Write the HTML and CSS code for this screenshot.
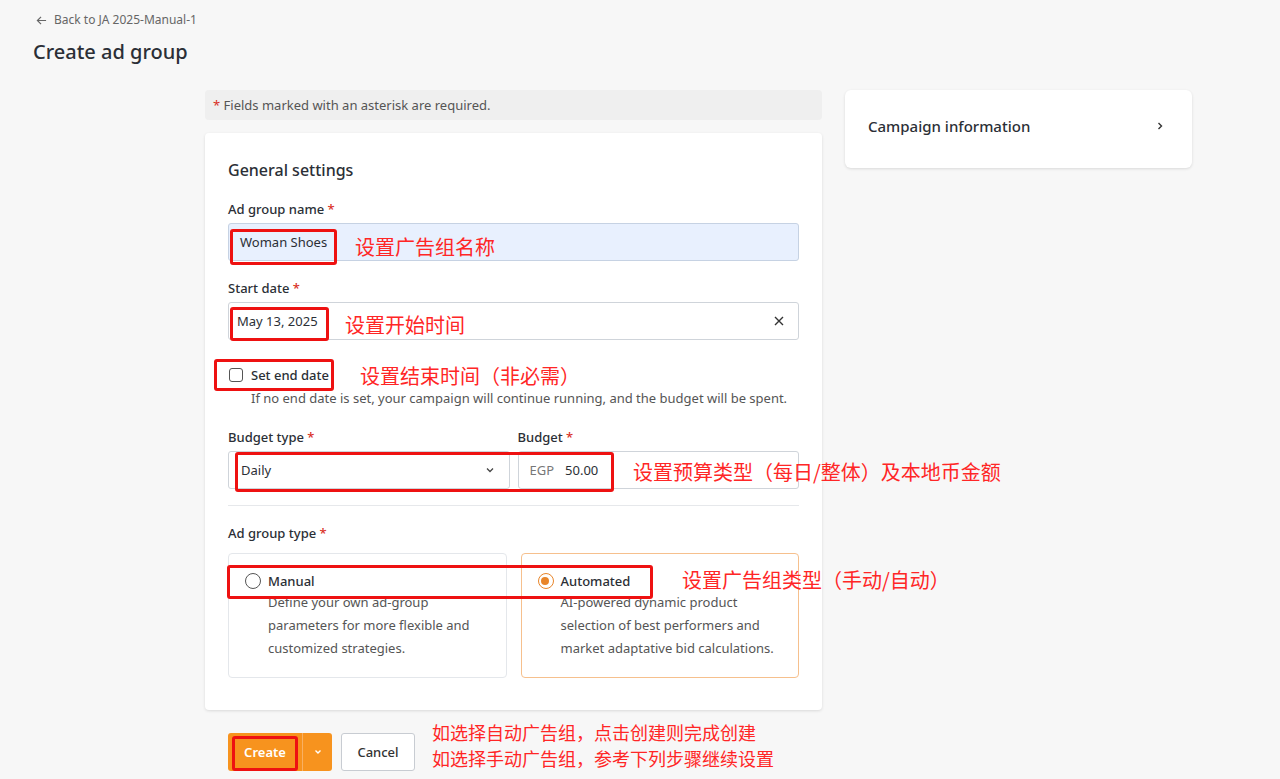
FILE: index.html
```html
<!DOCTYPE html>
<html lang="en">
<head>
    <meta charset="UTF-8">
    <meta name="viewport" content="width=device-width, initial-scale=1.0">
    <title>Create ad group</title>
    <link rel="stylesheet" href="styles.css">
</head>
<body>
    <div class="page">
        <div class="header">
            <a class="back-link" href="#">
                <svg width="11" height="11" viewBox="0 0 12 12"><path d="M11 6H1.5M5.5 2L1.5 6l4 4" fill="none" stroke="#666" stroke-width="1.3"/></svg>
                Back to JA 2025-Manual-1
            </a>
            <h1>Create ad group</h1>
        </div>

        <div class="layout">
            <div class="main-col">
                <div class="notice"><span class="req">*</span> Fields marked with an asterisk are required.</div>

                <div class="form-card">
                    <h2>General settings</h2>

                    <label class="field-label">Ad group name <span class="req">*</span></label>
                    <div class="input autofill">Woman Shoes</div>

                    <label class="field-label">Start date <span class="req">*</span></label>
                    <div class="input">
                        <span>May 13, 2025</span>
                        <svg class="clear" width="10" height="10" viewBox="0 0 10 10"><path d="M1 1l8 8M9 1L1 9" stroke="#333" stroke-width="1.4"/></svg>
                    </div>

                    <div class="check-row">
                        <span class="checkbox"></span>
                        <span class="check-label">Set end date</span>
                    </div>
                    <div class="helper">If no end date is set, your campaign will continue running, and the budget will be spent.</div>

                    <div class="budget-row">
                        <div class="budget-col">
                            <label class="field-label">Budget type <span class="req">*</span></label>
                            <div class="input select">
                                <span>Daily</span>
                                <svg width="10" height="10" viewBox="0 0 10 10"><path d="M2 3.5l3 3 3-3" fill="none" stroke="#444" stroke-width="1.3"/></svg>
                            </div>
                        </div>
                        <div class="budget-col">
                            <label class="field-label">Budget <span class="req">*</span></label>
                            <div class="input money">
                                <span class="currency">EGP</span>
                                <span>50.00</span>
                            </div>
                        </div>
                    </div>

                    <div class="divider"></div>

                    <label class="field-label">Ad group type <span class="req">*</span></label>
                    <div class="type-row">
                        <div class="type-card">
                            <div class="type-title"><span class="radio"></span>Manual</div>
                            <div class="type-desc">Define your own ad-group parameters for more flexible and customized strategies.</div>
                        </div>
                        <div class="type-card selected">
                            <div class="type-title"><span class="radio on"></span>Automated</div>
                            <div class="type-desc">AI-powered dynamic product selection of best performers and market adaptative bid calculations.</div>
                        </div>
                    </div>
                </div>

                <div class="actions">
                    <div class="split-btn">
                        <span class="split-main">Create</span>
                        <span class="split-arrow">
                            <svg width="10" height="10" viewBox="0 0 10 10"><path d="M2.5 3.5l2.5 2.5 2.5-2.5" fill="none" stroke="#fff" stroke-width="1.4"/></svg>
                        </span>
                    </div>
                    <button class="cancel-btn">Cancel</button>
                </div>
            </div>

            <div class="side-col">
                <div class="side-card">
                    <span>Campaign information</span>
                    <svg width="10" height="10" viewBox="0 0 10 10"><path d="M3.5 2l3 3-3 3" fill="none" stroke="#333" stroke-width="1.4"/></svg>
                </div>
            </div>
        </div>

        <!-- tutorial annotations -->
        <div class="mark" style="left:230px;top:229px;width:107px;height:36px"></div>
        <div class="mark" style="left:230px;top:307px;width:99px;height:34px"></div>
        <div class="mark" style="left:214px;top:359px;width:120px;height:32px"></div>
        <div class="mark" style="left:235px;top:452px;width:379px;height:40px"></div>
        <div class="mark" style="left:227px;top:565px;width:426px;height:34px"></div>
        <div class="mark" style="left:232px;top:736px;width:66px;height:35px"></div>

        <div class="note" style="left:355px;top:233px">设置广告组名称</div>
        <div class="note" style="left:345px;top:311px">设置开始时间</div>
        <div class="note" style="left:360px;top:362px">设置结束时间（非必需）</div>
        <div class="note" style="left:633px;top:458px">设置预算类型（每日/整体）及本地币金额</div>
        <div class="note" style="left:682px;top:566px">设置广告组类型（手动/自动）</div>
        <div class="note small" style="left:432px;top:719px">如选择自动广告组，点击创建则完成创建</div>
        <div class="note small" style="left:432px;top:745px">如选择手动广告组，参考下列步骤继续设置</div>
    </div>
</body>
</html>
```

FILE: styles.css
```css
html, body {
    margin: 0;
    padding: 0;
    background-color: #f7f7f7;
}
body {
    font-family: "Noto Sans", "Noto Sans CJK SC", sans-serif;
    color: #2b2f36;
    font-size: 13px;
}
.page {
    position: relative;
    height: 779px;
    overflow: hidden;
}
.header {
    padding: 12px 0 0 33px;
}
.back-link {
    display: flex;
    align-items: center;
    gap: 7px;
    padding-left: 3px;
    font-size: 12px;
    line-height: 16px;
    color: #666;
    text-decoration: none;
}
.header h1 {
    margin: 10px 0 0;
    font-size: 20px;
    line-height: 28px;
    font-weight: 500;
    color: #2b2f36;
}
.layout {
    display: flex;
    gap: 23px;
    padding: 24px 0 0 205px;
}
.main-col {
    width: 617px;
}
.side-col {
    width: 347px;
}
.notice {
    background-color: #efefef;
    border-radius: 4px;
    height: 30px;
    line-height: 30px;
    padding-left: 8px;
    color: #555;
    font-size: 13px;
}
.req {
    color: #d93025;
}
.form-card {
    margin-top: 13px;
    background-color: #fff;
    border-radius: 4px;
    box-shadow: 0 1px 3px rgba(0, 0, 0, 0.12);
    padding: 26px 23px 32px;
}
.form-card h2 {
    margin: 0 0 19px;
    font-size: 16px;
    line-height: 22px;
    font-weight: 500;
}
.field-label {
    display: block;
    font-size: 13px;
    line-height: 18px;
    font-weight: 500;
    margin-bottom: 5px;
}
.input {
    box-sizing: border-box;
    height: 38px;
    border: 1px solid #cfd4da;
    border-radius: 3px;
    display: flex;
    align-items: center;
    justify-content: space-between;
    padding: 0 14px 0 8px;
    font-size: 13px;
    color: #2b2f36;
    margin-bottom: 18px;
}
.input.autofill {
    background-color: #e8f0fe;
    border-color: #c6d2e3;
    padding-left: 11px;
}
.check-row {
    display: flex;
    align-items: center;
    gap: 8px;
    margin-top: 25px;
    height: 20px;
    padding-left: 1px;
}
.checkbox {
    box-sizing: border-box;
    width: 14px;
    height: 14px;
    border: 1.5px solid #555;
    border-radius: 3px;
}
.check-label {
    font-weight: 500;
}
.helper {
    margin: 4px 0 0 23px;
    line-height: 18px;
    color: #555;
}
.budget-row {
    display: flex;
    gap: 8px;
    margin-top: 21px;
}
.budget-col {
    flex: 1;
}
.budget-col .input {
    margin-bottom: 0;
}
.select {
    padding: 0 14px 0 12px;
}
.money {
    justify-content: flex-start;
    gap: 11px;
    padding-left: 11px;
}
.currency {
    color: #777;
}
.divider {
    height: 1px;
    background-color: #e6e8eb;
    margin: 16px 0 18px;
}
.type-row {
    display: flex;
    gap: 14px;
    margin-top: 11px;
}
.type-card {
    flex: 1;
    box-sizing: border-box;
    height: 125px;
    border: 1px solid #e4e7eb;
    border-radius: 4px;
    padding: 17px 12px 16px 39px;
}
.type-card.selected {
    border-color: #f6c08d;
}
.type-title {
    position: relative;
    font-weight: 500;
    line-height: 20px;
}
.radio {
    position: absolute;
    left: -23px;
    top: 2px;
    box-sizing: border-box;
    width: 16px;
    height: 16px;
    border: 1.5px solid #555;
    border-radius: 50%;
}
.radio.on {
    border-color: #e8852a;
}
.radio.on::after {
    content: "";
    position: absolute;
    left: 2.5px;
    top: 2.5px;
    width: 8px;
    height: 8px;
    border-radius: 50%;
    background-color: #e8852a;
}
.type-desc {
    line-height: 23px;
    color: #555;
}
.actions {
    display: flex;
    gap: 9px;
    margin-top: 23px;
    padding-left: 23px;
}
.split-btn {
    display: flex;
    height: 38px;
    background-color: #f7931e;
    border-radius: 3px;
    color: #fff;
    font-weight: 600;
}
.split-main {
    width: 74px;
    display: flex;
    align-items: center;
    justify-content: center;
    border-right: 1px solid #f9b062;
}
.split-arrow {
    width: 29px;
    display: flex;
    align-items: center;
    justify-content: center;
}
.cancel-btn {
    height: 38px;
    width: 74px;
    background-color: #fff;
    border: 1px solid #c8ccd2;
    border-radius: 3px;
    font-family: inherit;
    font-size: 13px;
    font-weight: 500;
    color: #333;
}
.side-card {
    box-sizing: border-box;
    height: 78px;
    background-color: #fff;
    border-radius: 6px;
    box-shadow: 0 1px 3px rgba(0, 0, 0, 0.12);
    display: flex;
    align-items: center;
    justify-content: space-between;
    padding: 0 27px 6px 23px;
    font-size: 15px;
    font-weight: 500;
}
.mark {
    position: absolute;
    box-sizing: border-box;
    border: 3px solid #ee1111;
    border-radius: 3px;
}
.note {
    position: absolute;
    font-family: "Noto Sans CJK SC", sans-serif;
    font-size: 20px;
    line-height: 28px;
    color: #ff2626;
    white-space: nowrap;
}
.note.small {
    font-size: 18px;
    line-height: 26px;
}
```
